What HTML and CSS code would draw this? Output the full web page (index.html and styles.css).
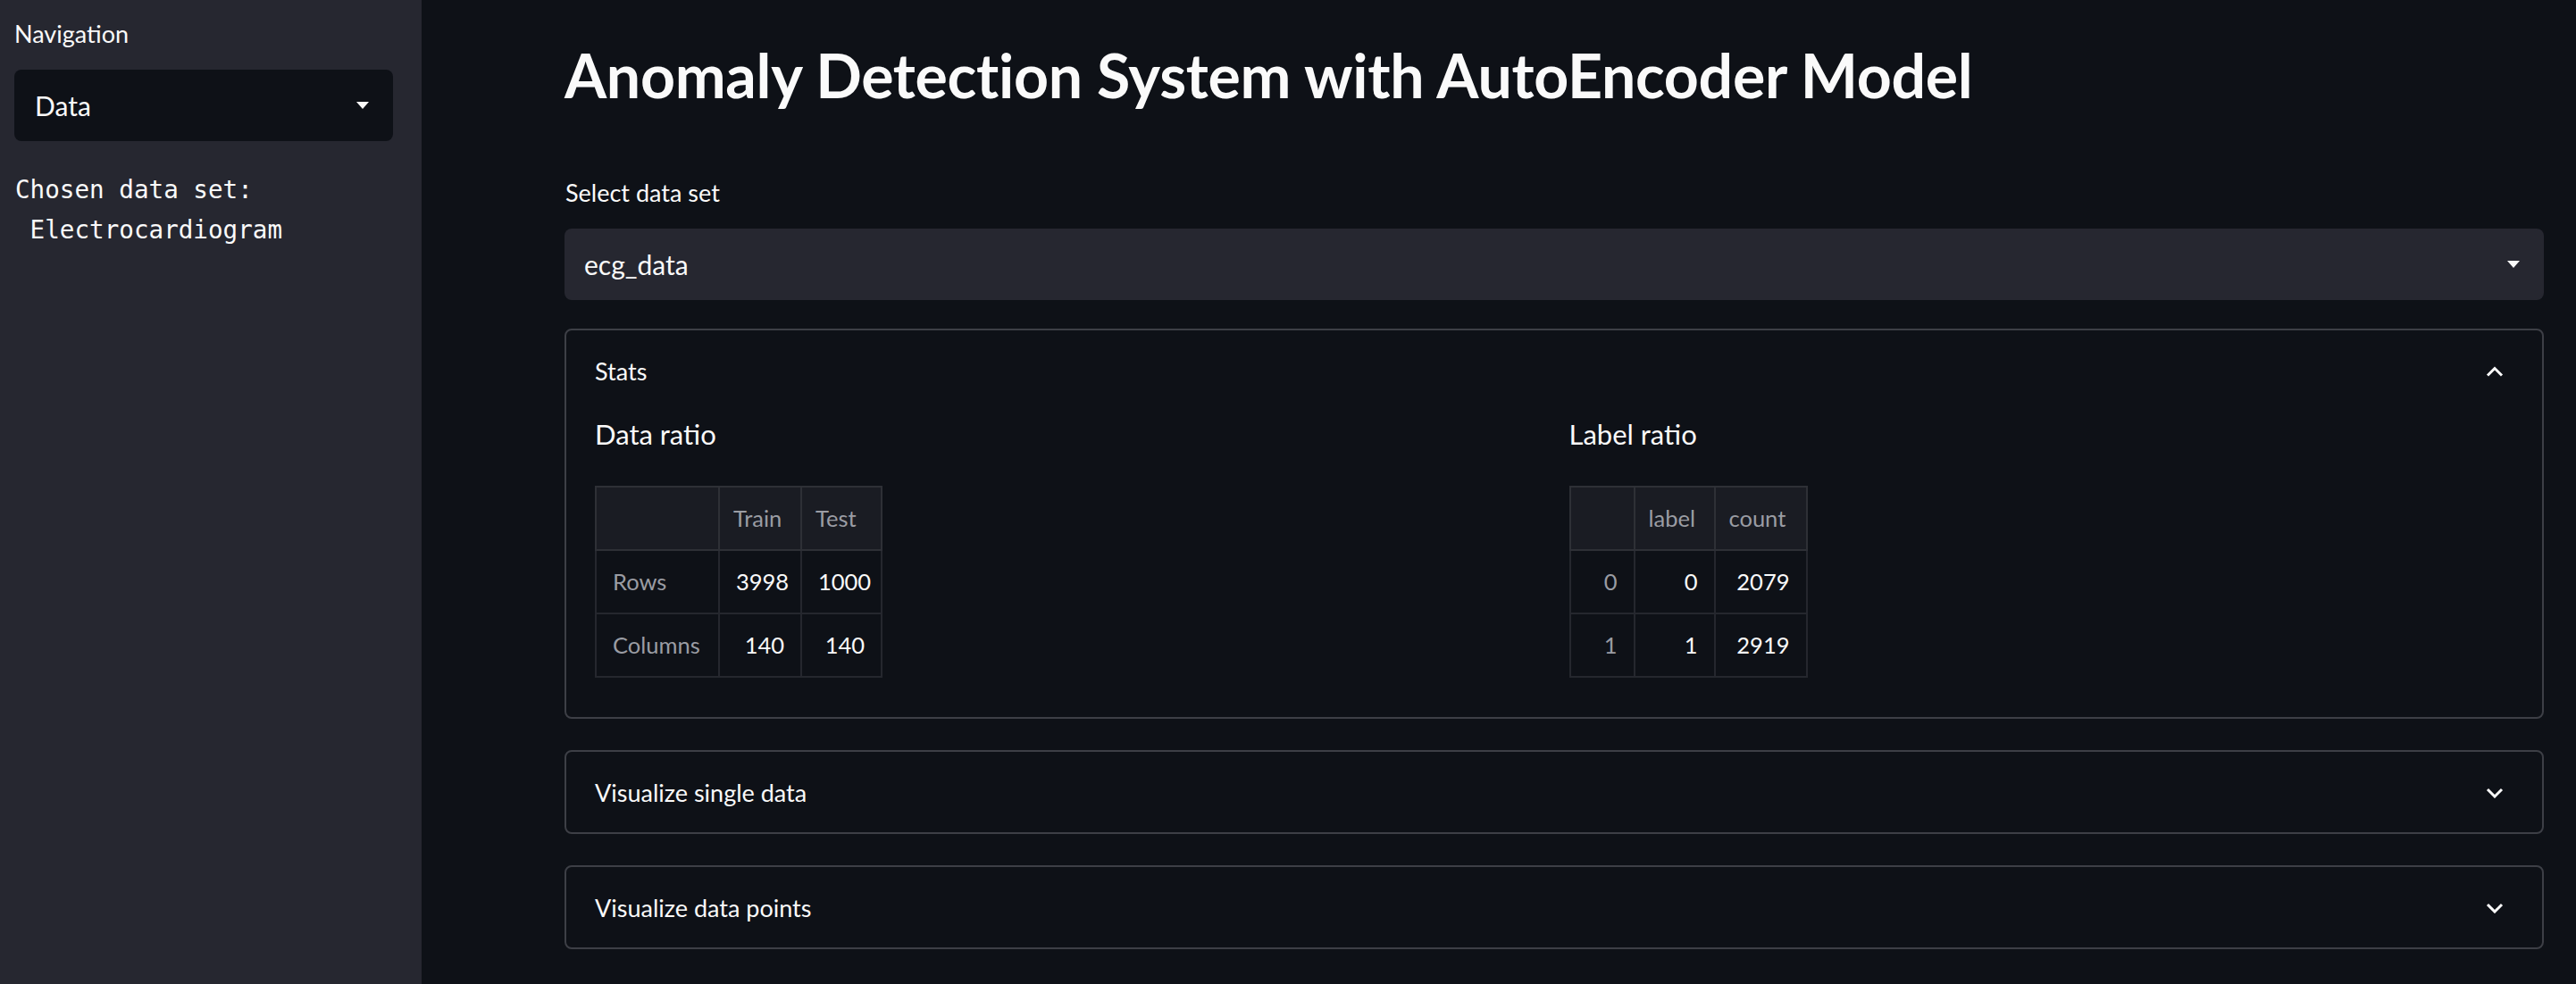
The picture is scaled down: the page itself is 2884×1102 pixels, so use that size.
FILE: index.html
```html
<!DOCTYPE html>
<html lang="en">
<head>
<meta charset="utf-8">
<title>Anomaly Detection System</title>
<link rel="stylesheet" href="styles.css">
</head>
<body>
<div class="app">
  <aside class="sidebar">
    <div class="label">Navigation</div>
    <div class="select select-side">
      <span class="select-value">Data</span>
      <svg class="caret" width="14" height="8" viewBox="0 0 14 8"><polygon points="0,0 14,0 7,8"/></svg>
    </div>
    <pre class="mono">Chosen data set:
 Electrocardiogram</pre>
  </aside>
  <main class="main">
    <div class="content">
      <h1 class="title">Anomaly Detection System with AutoEncoder Model</h1>
      <div class="label label-main">Select data set</div>
      <div class="select select-main">
        <span class="select-value">ecg_data</span>
        <svg class="caret" width="14" height="8" viewBox="0 0 14 8"><polygon points="0,0 14,0 7,8"/></svg>
      </div>

      <section class="expander">
        <div class="exp-head">
          <span class="exp-title">Stats</span>
          <svg class="chev" width="20" height="12" viewBox="0 0 20 12"><polyline points="2,10.5 10,2.5 18,10.5"/></svg>
        </div>
        <div class="exp-body">
          <div class="col">
            <h4 class="sub">Data ratio</h4>
            <table class="df df-data">
              <colgroup><col class="c-rowh"><col class="c-train"><col class="c-test"></colgroup>
              <thead><tr><th></th><th>Train</th><th>Test</th></tr></thead>
              <tbody>
                <tr><th class="rowh">Rows</th><td>3998</td><td>1000</td></tr>
                <tr><th class="rowh">Columns</th><td>140</td><td>140</td></tr>
              </tbody>
            </table>
          </div>
          <div class="col">
            <h4 class="sub">Label ratio</h4>
            <table class="df df-label">
              <colgroup><col class="c-idx"><col class="c-label"><col class="c-count"></colgroup>
              <thead><tr><th></th><th>label</th><th>count</th></tr></thead>
              <tbody>
                <tr><th class="idx">0</th><td>0</td><td>2079</td></tr>
                <tr><th class="idx">1</th><td>1</td><td>2919</td></tr>
              </tbody>
            </table>
          </div>
        </div>
      </section>

      <section class="expander">
        <div class="exp-head">
          <span class="exp-title">Visualize single data</span>
          <svg class="chev" width="20" height="12" viewBox="0 0 20 12"><polyline points="2,2 10,10 18,2"/></svg>
        </div>
      </section>

      <section class="expander">
        <div class="exp-head">
          <span class="exp-title">Visualize data points</span>
          <svg class="chev" width="20" height="12" viewBox="0 0 20 12"><polyline points="2,2 10,10 18,2"/></svg>
        </div>
      </section>
    </div>
  </main>
</div>
</body>
</html>
```
FILE: styles.css
```css
* { box-sizing: border-box; }

html, body {
  margin: 0;
  padding: 0;
  height: 100%;
}

body {
  background: #0e1117;
  color: #fafafa;
  font-family: "Lato", "Open Sans", sans-serif;
  overflow: hidden;
}

.app {
  display: flex;
  height: 1102px;
}

/* ---------- sidebar ---------- */
.sidebar {
  width: 472px;
  flex: 0 0 472px;
  background: #262730;
  padding: 19.5px 32px 0 16px;
}

.label {
  font-size: 27px;
  line-height: 36px;
  font-weight: 400;
}

.select {
  display: flex;
  align-items: center;
  justify-content: space-between;
  height: 80px;
  border-radius: 8px;
  padding: 0 27px 0 22px;
}

.select-value {
  font-size: 30px;
  line-height: 40px;
}

.caret { fill: #fafafa; display: block; }

.select-side {
  margin-top: 22.5px;
  background: #0e1117;
  padding-left: 23px;
}

.mono {
  margin: 32px 0 0 1px;
  font-family: "DejaVu Sans Mono", "Liberation Mono", monospace;
  font-size: 27.6px;
  line-height: 45px;
  color: #fafafa;
  white-space: pre;
}

/* ---------- main ---------- */
.main {
  flex: 1;
  padding: 43.4px 36px 0 160px;
}

.content {
  display: flex;
  flex-direction: column;
}

.title {
  margin: 0 0 73.5px 0;
  font-size: 68px;
  line-height: 81.6px;
  font-weight: 700;
  letter-spacing: -0.3px;
  white-space: nowrap;
}

.label-main {
  margin-bottom: 21.5px;
  padding-left: 1px;
}

.select-main {
  background: #262730;
}

/* ---------- expanders ---------- */
.expander {
  border: 2px solid #3d3f46;
  border-radius: 8px;
  margin-top: 35px;
}

.select-main + .expander { margin-top: 32px; }

.exp-head {
  display: flex;
  align-items: center;
  justify-content: space-between;
  height: 90px;
  padding: 2px 43px 0 32px;
}

.exp-title {
  font-size: 27px;
  line-height: 36px;
}

.chev {
  display: block;
  fill: none;
  stroke: #fafafa;
  stroke-width: 3;
}

.exp-body {
  display: grid;
  grid-template-columns: 1fr 1fr;
  column-gap: 34px;
  padding: 6px 33px 44px 32px;
}

.sub {
  margin: 0 0 38px 0;
  font-size: 31px;
  line-height: 40px;
  font-weight: 400;
}

/* ---------- dataframes ---------- */
.df {
  border-collapse: collapse;
  border: 2px solid #2e3036;
  font-size: 25.5px;
  table-layout: fixed;
}

.df-data { width: 320px; }
.df-label { width: 265px; }

.df th, .df td {
  height: 71px;
  line-height: 30px;
  padding: 0 18px;
  border: 2px solid #25272e;
  white-space: nowrap;
  font-weight: 400;
}

.df thead th {
  background: #1a1c23;
  color: #9a9ca3;
  text-align: left;
  padding-left: 15px;
  border-color: #2e3036;
}

.df td {
  text-align: right;
  color: #fafafa;
}

.df .rowh {
  text-align: left;
  color: #9a9ca3;
  background: #0e1117;
}

.df .idx {
  text-align: right;
  color: #9a9ca3;
}

.c-rowh { width: 138px; }
.c-train { width: 92px; }
.c-test { width: 90px; }
.c-idx { width: 72px; }
.c-label { width: 90px; }
.c-count { width: 103px; }
```
